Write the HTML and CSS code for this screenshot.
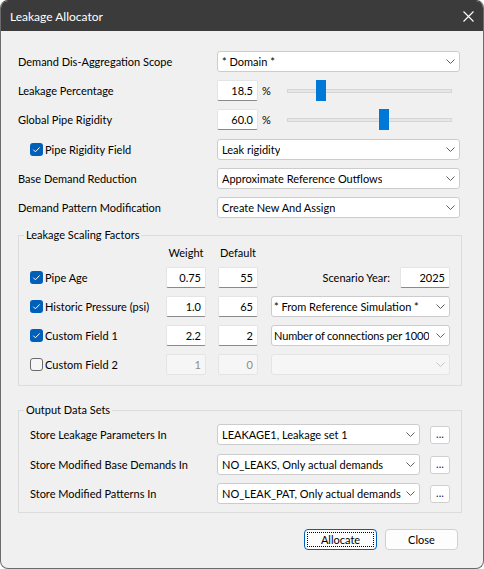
FILE: index.html
```html
<!DOCTYPE html>
<html>
<head>
<meta charset="utf-8">
<title>Leakage Allocator</title>
<link rel="stylesheet" href="styles.css">
</head>
<body>
<div class="window">
  <div class="titlebar">
    <span class="title">Leakage Allocator</span>
    <span class="close-x"><svg width="11" height="11" viewBox="0 0 11 11"><path d="M0.5 0.5 L10.5 10.5 M10.5 0.5 L0.5 10.5" stroke="#ffffff" stroke-width="1.1" fill="none"/></svg></span>
  </div>
  <div class="content">
    <div class="form">
      <div class="row">
        <span class="lbl">Demand Dis-Aggregation Scope</span>
        <div class="combo"><span class="combo-text">* Domain *</span><svg class="chev" width="9" height="5" viewBox="0 0 9 5"><path d="M0.5 0.5 L4.5 4.5 L8.5 0.5" fill="none" stroke="#606060"/></svg></div>
      </div>
      <div class="row">
        <span class="lbl">Leakage Percentage</span>
        <div class="ctl">
          <div class="edit pct-in">18.5</div>
          <span class="pct">%</span>
          <div class="slider"><div class="track"></div><div class="thumb" style="left:28.5px"></div></div>
        </div>
      </div>
      <div class="row">
        <span class="lbl">Global Pipe Rigidity</span>
        <div class="ctl">
          <div class="edit pct-in">60.0</div>
          <span class="pct">%</span>
          <div class="slider"><div class="track"></div><div class="thumb" style="left:92.4px"></div></div>
        </div>
      </div>
      <div class="row r4">
        <span class="chk-label indent"><span class="cb on"><svg width="13" height="13" viewBox="0 0 13 13"><path d="M3.3 6.7 L5.4 8.8 L9.7 4.4" fill="none" stroke="#ffffff" stroke-width="1"/></svg></span>Pipe Rigidity Field</span>
        <div class="combo"><span class="combo-text">Leak rigidity</span><svg class="chev" width="9" height="5" viewBox="0 0 9 5"><path d="M0.5 0.5 L4.5 4.5 L8.5 0.5" fill="none" stroke="#606060"/></svg></div>
      </div>
      <div class="row">
        <span class="lbl">Base Demand Reduction</span>
        <div class="combo"><span class="combo-text">Approximate Reference Outflows</span><svg class="chev" width="9" height="5" viewBox="0 0 9 5"><path d="M0.5 0.5 L4.5 4.5 L8.5 0.5" fill="none" stroke="#606060"/></svg></div>
      </div>
      <div class="row">
        <span class="lbl">Demand Pattern Modification</span>
        <div class="combo"><span class="combo-text">Create New And Assign</span><svg class="chev" width="9" height="5" viewBox="0 0 9 5"><path d="M0.5 0.5 L4.5 4.5 L8.5 0.5" fill="none" stroke="#606060"/></svg></div>
      </div>
    </div>

    <fieldset class="group g1">
      <legend>Leakage Scaling Factors</legend>
      <div class="g1-head">
        <span class="head-sp"></span>
        <span class="head w">Weight</span>
        <span class="head d">Default</span>
      </div>
      <div class="g1-rows">
        <div class="g1-row">
          <span class="chk-label cell"><span class="cb on"><svg width="13" height="13" viewBox="0 0 13 13"><path d="M3.3 6.7 L5.4 8.8 L9.7 4.4" fill="none" stroke="#ffffff" stroke-width="1"/></svg></span>Pipe Age</span>
          <div class="edit w">0.75</div>
          <div class="edit d">55</div>
          <div class="last year">
            <span>Scenario Year:</span>
            <div class="edit year-in">2025</div>
          </div>
        </div>
        <div class="g1-row">
          <span class="chk-label cell"><span class="cb on"><svg width="13" height="13" viewBox="0 0 13 13"><path d="M3.3 6.7 L5.4 8.8 L9.7 4.4" fill="none" stroke="#ffffff" stroke-width="1"/></svg></span>Historic Pressure (psi)</span>
          <div class="edit w">1.0</div>
          <div class="edit d">65</div>
          <div class="combo last tight"><span class="combo-text">* From Reference Simulation *</span><svg class="chev" width="9" height="5" viewBox="0 0 9 5"><path d="M0.5 0.5 L4.5 4.5 L8.5 0.5" fill="none" stroke="#606060"/></svg></div>
        </div>
        <div class="g1-row">
          <span class="chk-label cell"><span class="cb on"><svg width="13" height="13" viewBox="0 0 13 13"><path d="M3.3 6.7 L5.4 8.8 L9.7 4.4" fill="none" stroke="#ffffff" stroke-width="1"/></svg></span>Custom Field 1</span>
          <div class="edit w">2.2</div>
          <div class="edit d">2</div>
          <div class="combo last tight"><span class="combo-text narrow">Number of connections per 1000</span><svg class="chev" width="9" height="5" viewBox="0 0 9 5"><path d="M0.5 0.5 L4.5 4.5 L8.5 0.5" fill="none" stroke="#606060"/></svg></div>
        </div>
        <div class="g1-row">
          <span class="chk-label cell"><span class="cb off"></span>Custom Field 2</span>
          <div class="edit w disabled">1</div>
          <div class="edit d disabled">0</div>
          <div class="combo last disabled"><span class="combo-text"></span><svg class="chev" width="9" height="5" viewBox="0 0 9 5"><path d="M0.5 0.5 L4.5 4.5 L8.5 0.5" fill="none" stroke="#c4c4c4"/></svg></div>
        </div>
      </div>
    </fieldset>

    <fieldset class="group g2">
      <legend>Output Data Sets</legend>
      <div class="g2-rows">
        <div class="g2-row">
          <span class="g2-lbl">Store Leakage Parameters In</span>
          <div class="combo g2-combo"><span class="combo-text">LEAKAGE1, Leakage set 1</span><svg class="chev" width="9" height="5" viewBox="0 0 9 5"><path d="M0.5 0.5 L4.5 4.5 L8.5 0.5" fill="none" stroke="#606060"/></svg></div>
          <span class="ellipsis">...</span>
        </div>
        <div class="g2-row second">
          <span class="g2-lbl">Store Modified Base Demands In</span>
          <div class="combo g2-combo"><span class="combo-text">NO_LEAKS, Only actual demands</span><svg class="chev" width="9" height="5" viewBox="0 0 9 5"><path d="M0.5 0.5 L4.5 4.5 L8.5 0.5" fill="none" stroke="#606060"/></svg></div>
          <span class="ellipsis">...</span>
        </div>
        <div class="g2-row third">
          <span class="g2-lbl">Store Modified Patterns In</span>
          <div class="combo g2-combo"><span class="combo-text">NO_LEAK_PAT, Only actual demands</span><svg class="chev" width="9" height="5" viewBox="0 0 9 5"><path d="M0.5 0.5 L4.5 4.5 L8.5 0.5" fill="none" stroke="#606060"/></svg></div>
          <span class="ellipsis">...</span>
        </div>
      </div>
    </fieldset>

    <div class="buttons">
      <span class="btn default">Allocate</span>
      <span class="btn">Close</span>
    </div>
  </div>
</div>
</body>
</html>
```

FILE: styles.css
```css
* { box-sizing: border-box; }
body {
  margin: 0;
  background: #ffffff;
  font-family: "Lato", "Liberation Sans", sans-serif;
  font-size: 11px;
  color: #000000;
}
.window {
  width: 484px;
  height: 569px;
  border: 1px solid #6b6b6b;
  border-top-color: #3b3b3b;
  border-radius: 8px;
  overflow: hidden;
  background: #f0f0f0;
  display: flex;
  flex-direction: column;
}
.titlebar {
  flex: none;
  height: 30px;
  background: #3b3b3b;
  color: #ffffff;
  display: flex;
  align-items: center;
  padding: 0 9px;
  font-size: 12px;
}
.title { white-space: nowrap; }
.close-x { margin-left: auto; display: flex; }

.content { padding: 20px 21px 0 17px; }

.form { display: flex; flex-direction: column; gap: 8px; }
.row {
  display: grid;
  grid-template-columns: 199px 243px;
  height: 21px;
  align-items: center;
}
.row.r4 { margin-top: 1px; }
.lbl, .g2-lbl { white-space: nowrap; }
.indent { margin-left: 12px; }

.chk-label { display: flex; align-items: center; gap: 2px; white-space: nowrap; }
.cb {
  width: 13px;
  height: 13px;
  border-radius: 3px;
  display: flex;
  flex: none;
}
.cb.on { background: #005fb8; }
.cb.off { border: 1px solid #6a6a6a; background: #f6f6f6; }

.combo {
  height: 21px;
  background: #ffffff;
  border: 1px solid #cccccc;
  border-radius: 3px;
  display: flex;
  align-items: center;
  justify-content: space-between;
  padding: 0 4px 0 4px;
}
.combo-text { white-space: nowrap; overflow: hidden; }
.chev { flex: none; margin-left: 4px; }
.combo.tight { padding-left: 2px; }
.combo.tight .chev { margin-left: 2px; }
.narrow { letter-spacing: -0.15px; }
.combo.disabled { background: #f6f6f6; border-color: #e4e4e4; }

.edit {
  height: 21px;
  background: #ffffff;
  border: 1px solid #e4e4e4;
  border-bottom-color: #8a8a8a;
  border-radius: 2px;
  text-align: right;
  padding: 0 4px;
  line-height: 19px;
  white-space: nowrap;
}
.edit.disabled { background: #f6f6f6; border-color: #e4e4e4; color: #8c8c8c; }

.ctl { display: flex; align-items: center; height: 21px; }
.pct-in { width: 41px; flex: none; }
.pct { width: 29px; padding-left: 4px; flex: none; }
.slider { position: relative; width: 165px; height: 21px; flex: none; }
.track {
  margin-top: 9px;
  height: 4px;
  background: #e6e6e6;
  border: 1px solid #d6d6d6;
}
.thumb {
  position: absolute;
  top: 0;
  width: 10px;
  height: 21px;
  background: #0078d7;
}

.group {
  margin: 0;
  min-width: 0;
  border: 1px solid #dcdcdc;
  padding: 0 11px 10px;
}
.group legend {
  padding: 0 2px;
  margin-left: -6px;
  line-height: 16px;
}
.g1 { margin-top: 9px; }
.g1-head { display: flex; height: 16px; margin-top: 1px; align-items: center; }
.head-sp { width: 136px; }
.head { width: 40px; text-align: center; }
.head.d { margin-left: 12px; }
.g1-rows { display: flex; flex-direction: column; gap: 8px; margin-top: 7px; }
.g1-row { display: flex; align-items: center; height: 21px; }
.cell { width: 136px; flex: none; }
.edit.w { width: 40px; flex: none; }
.edit.d { width: 40px; flex: none; margin-left: 12px; }
.last { width: 179px; flex: none; margin-left: 13px; }
.year { display: flex; align-items: center; justify-content: flex-end; gap: 10px; }
.year-in { width: 50px; }

.g2 { margin-top: 16px; padding-bottom: 8px; }
.g2-rows { display: flex; flex-direction: column; margin-top: 6px; }
.g2-row { display: flex; align-items: center; height: 21px; }
.g2-row.second { margin-top: 9px; }
.g2-row.third { margin-top: 8px; }
.g2-lbl { width: 187px; flex: none; }
.g2-combo { width: 203px; flex: none; }
.ellipsis {
  margin-left: 10px;
  width: 20px;
  height: 18px;
  background: #ffffff;
  border: 1px solid #cfcfcf;
  border-radius: 3px;
  display: flex;
  align-items: center;
  justify-content: center;
  line-height: 1;
  color: #1a1a50;
  padding-bottom: 2px;
}

.buttons {
  display: flex;
  justify-content: flex-end;
  gap: 8px;
  margin-top: 16px;
  padding-right: 4px;
}
.btn {
  width: 73px;
  height: 21px;
  background: #fdfdfd;
  border: 1px solid #d0d0d0;
  border-radius: 4px;
  display: flex;
  align-items: center;
  justify-content: center;
}
.btn.default {
  border-color: #005fb8;
  outline: 1px dotted #000000;
  outline-offset: -4px;
}
```
